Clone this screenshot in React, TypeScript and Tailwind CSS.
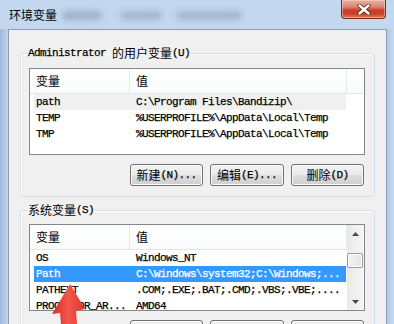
import React from "react";

function M({ children, className = "" }: { children: React.ReactNode; className?: string }) {
  return (
    <span className={"font-['Liberation_Mono',monospace] text-[11px] leading-[14px] tracking-[-0.6px] whitespace-pre [-webkit-text-stroke:0.25px_currentColor] " + className}>
      {children}
    </span>
  );
}

function C({ children, className = "" }: { children: React.ReactNode; className?: string }) {
  return (
    <span className={"font-['Noto_Sans_CJK_SC',sans-serif] text-[12px] leading-[14px] " + className}>
      {children}
    </span>
  );
}

function Btn({ cjk, tail, w }: { cjk: string; tail: string; w: string }) {
  return (
    <div className={"h-[22px] shrink-0 rounded-[3px] border border-[#707070] bg-[linear-gradient(#f2f2f2_0%,#ebebeb_48%,#dddddd_52%,#cfcfcf_100%)] shadow-[inset_0_0_0_1px_#fbfbfb] flex items-center justify-center text-black " + w}>
      <C>{cjk}</C>
      <M className="text-[10px] tracking-[-0.3px]">{tail}</M>
    </div>
  );
}

type Row = { a: string; b: string; kind?: "hover" | "sel" };

function ListView({ rows, scroll }: { rows: Row[]; scroll?: boolean }) {
  return (
    <div className="h-[87px] border border-[#828790] bg-white flex overflow-hidden shrink-0">
      <div className="flex-1 flex flex-col min-w-0">
        <div className="h-[25px] shrink-0 flex border-b border-[#e2e5ea] bg-[linear-gradient(#ffffff,#fafbfc)]">
          <div className="w-[100px] shrink-0 border-r border-[#e5e8ec] pl-[6px] flex items-center">
            <C>变量</C>
          </div>
          <div className="w-[217px] shrink-0 border-r border-[#e5e8ec] pl-[6px] flex items-center">
            <C>值</C>
          </div>
          <div className="flex-1" />
        </div>
        {rows.map((r, i) => (
          <div
            key={i}
            className={
              "h-[16px] shrink-0 ml-[4px] w-[312px] flex items-center " +
              (r.kind === "sel"
                ? "bg-[#3399ff] text-white"
                : r.kind === "hover"
                ? "bg-[#f0f0f0] text-black"
                : "text-black")
            }
          >
            <div className="w-[96px] shrink-0 pl-[2px] overflow-hidden flex items-center h-[16px]">
              <M>{r.a}</M>
            </div>
            <div className="flex-1 pl-[6px] overflow-hidden flex items-center h-[16px]">
              <M>{r.b}</M>
            </div>
          </div>
        ))}
      </div>
      {scroll && (
        <div className="w-[17px] shrink-0 flex flex-col bg-[linear-gradient(90deg,#e9e9e9,#f6f6f6)]">
          <div className="h-[17px] flex items-center justify-center">
            <svg width="7" height="4" viewBox="0 0 7 4">
              <path d="M0 4 L3.5 0 L7 4 Z" fill="#4a4a4a" />
            </svg>
          </div>
          <div className="flex-1">
            <div className="mt-[11px] mr-[1px] h-[15px] rounded-[2px] border border-[#9a9a9a] bg-[linear-gradient(90deg,#f4f4f4,#e4e4e4)] shadow-[inset_0_0_0_1px_#fdfdfd]" />
          </div>
          <div className="h-[17px] flex items-center justify-center">
            <svg width="7" height="4" viewBox="0 0 7 4">
              <path d="M0 0 L3.5 4 L7 0 Z" fill="#4a4a4a" />
            </svg>
          </div>
        </div>
      )}
    </div>
  );
}

function Buttons({ mt }: { mt: string }) {
  return (
    <div className={"flex justify-end gap-[7px] mr-[1px] " + mt}>
      <Btn cjk="新建" tail="(N)..." w="w-[73px]" />
      <Btn cjk="编辑" tail="(E)..." w="w-[74px]" />
      <Btn cjk="删除" tail="(D)" w="w-[73px]" />
    </div>
  );
}

export default function App() {
  const userRows: Row[] = [
    { a: "path", b: "C:\\Program Files\\Bandizip\\", kind: "hover" },
    { a: "TEMP", b: "%USERPROFILE%\\AppData\\Local\\Temp" },
    { a: "TMP", b: "%USERPROFILE%\\AppData\\Local\\Temp" },
  ];
  const sysRows: Row[] = [
    { a: "OS", b: "Windows_NT" },
    { a: "Path", b: "C:\\Windows\\system32;C:\\Windows;...", kind: "sel" },
    { a: "PATHEXT", b: ".COM;.EXE;.BAT;.CMD;.VBS;.VBE;...." },
    { a: "PROCESSOR_AR...", b: "AMD64" },
  ];

  return (
    <div className="relative w-[394px] h-[324px] overflow-hidden flex flex-col bg-[linear-gradient(#c3d7ee,#cadcf0)]">
      {/* title bar */}
      <div className="relative h-[29px] shrink-0 flex items-start">
        <div className="absolute left-[62px] top-[11px] w-[40px] h-[9px] rounded-full bg-[#8d9fb6] blur-[3px] opacity-70" />
        <div className="absolute left-[120px] top-[11px] w-[42px] h-[9px] rounded-full bg-[#8d9fb6] blur-[3px] opacity-60" />
        <div className="absolute left-[176px] top-[11px] w-[66px] h-[9px] rounded-full bg-[#8d9fb6] blur-[3px] opacity-60" />
        <div className="relative pl-[9px] pt-[8px] h-[22px] flex items-center text-black">
          <C className="text-[12px]">环境变量</C>
        </div>
        <div className="relative ml-auto mr-[8px] w-[45px] h-[19px] rounded-b-[4px] border border-t-0 border-[#7a2a1c] bg-[linear-gradient(#eab0a2_0%,#d98270_40%,#c8432c_55%,#c73f28_75%,#e07558_100%)] shadow-[inset_0_0_0_1px_rgba(255,220,210,0.5)] flex items-center justify-center">
          <svg width="14" height="11" viewBox="0 0 14 11">
            <path d="M2.5 1.5 L11.5 9.5 M11.5 1.5 L2.5 9.5" stroke="#5a2116" strokeWidth="4" strokeLinecap="round" />
            <path d="M2.5 1.5 L11.5 9.5 M11.5 1.5 L2.5 9.5" stroke="#ffffff" strokeWidth="2.4" strokeLinecap="round" />
          </svg>
        </div>
      </div>

      {/* body */}
      <div className="flex-1 flex min-h-0">
        <div className="w-[8px] shrink-0 bg-[linear-gradient(90deg,#9fb9d8,#c2d6ec)]" />
        <div className="flex-1 min-w-0 flex flex-col bg-[#f0f0f0] border-l border-t border-r border-[#8c9db3] px-[11px] pt-[16px]">
          <fieldset className="border border-[#d5dfe5] rounded-[3px] pl-[8px] pr-[9px] pt-[8px] pb-[10px] shadow-[inset_1px_1px_0_#ffffff]">
            <legend className="ml-[-2px] px-[1px] h-[14px] flex items-center text-black">
              <M>Administrator </M>
              <C>的用户变量</C>
              <M>(U)</M>
            </legend>
            <ListView rows={userRows} />
            <Buttons mt="mt-[9px]" />
          </fieldset>

          <fieldset className="mt-[6px] border border-[#d5dfe5] rounded-[3px] pl-[8px] pr-[9px] pt-[7px] pb-[10px] shadow-[inset_1px_1px_0_#ffffff]">
            <legend className="ml-[-2px] px-[1px] h-[14px] flex items-center text-black">
              <C>系统变量</C>
              <M>(S)</M>
            </legend>
            <ListView rows={sysRows} scroll />
            <Buttons mt="mt-[9px]" />
          </fieldset>
        </div>
        <div className="w-[7px] shrink-0 bg-[linear-gradient(90deg,#b3cbe6,#c6daef)]" />
      </div>

      {/* red arrow annotation */}
      <svg className="absolute inset-0 pointer-events-none" width="394" height="324" viewBox="0 0 394 324">
        <defs>
          <linearGradient id="ar" x1="0" y1="0" x2="1" y2="0">
            <stop offset="0" stopColor="#e02a22" />
            <stop offset="0.5" stopColor="#f2574c" />
            <stop offset="1" stopColor="#e3332a" />
          </linearGradient>
        </defs>
        <polygon points="70,284 85,309 76,311 77,324 61,324 60,313 52,314" fill="url(#ar)" />
      </svg>
    </div>
  );
}
